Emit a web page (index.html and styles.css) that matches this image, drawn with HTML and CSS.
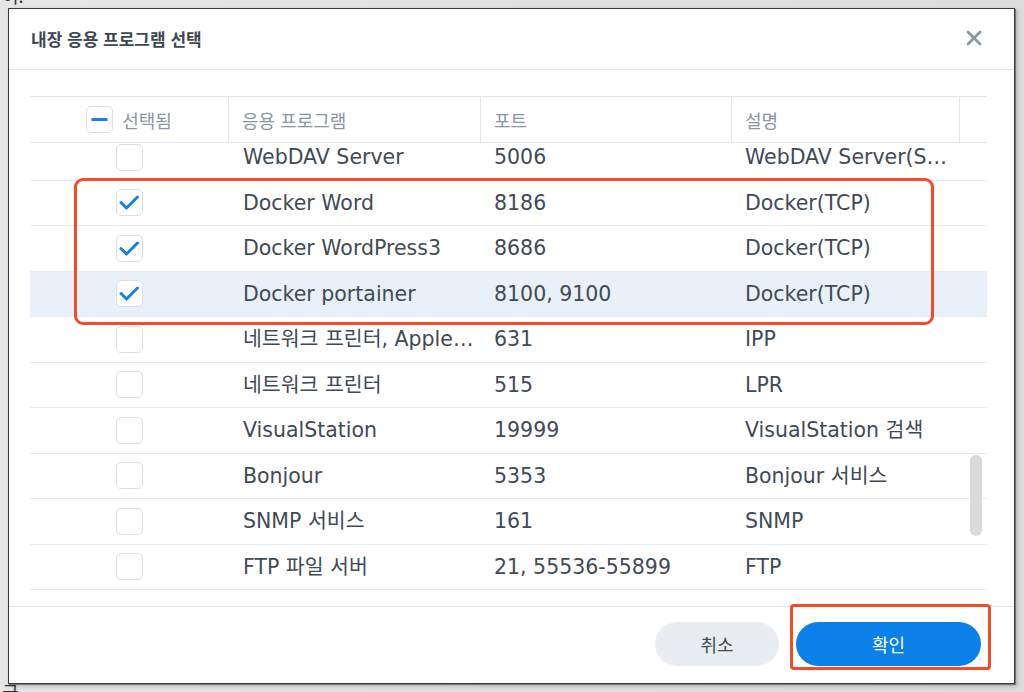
FILE: index.html
```html
<!DOCTYPE html>
<html lang="ko">
<head>
  <meta charset="UTF-8">
  <title>내장 응용 프로그램 선택</title>
  <link rel="stylesheet" href="styles.css">
</head>
<body>

<div class="page">
  <!-- 뒤쪽 창에 남은 글자 -->
  <div class="back-text back-top">이.</div>
  <div class="back-text back-bottom">글</div>

  <div class="dialog">
    <div class="dlg-head">
      <span class="dlg-title">내장 응용 프로그램 선택</span>
      <a class="dlg-close" href="javascript:;">
        <svg width="16" height="16" viewBox="0 0 16 16"><path d="M2 2L14 14M14 2L2 14" stroke="#8d97a1" stroke-width="2.8" stroke-linecap="round"/></svg>
      </a>
    </div>

    <div class="dlg-body">
      <div class="grid-head">
        <div class="hcell hcell-check">
          <span class="cbox">
            <svg width="27" height="27" viewBox="0 0 27 27"><path d="M5.5 13.5H21.5" stroke="#1a7fe6" stroke-width="3"/></svg>
          </span>
          <span>선택됨</span>
        </div>
        <div class="hcell">응용 프로그램</div>
        <div class="hcell">포트</div>
        <div class="hcell">설명</div>
        <div class="hcell hcell-last"></div>
      </div>

      <div class="grid-body">
        <div class="rows">
          <div class="row">
            <div class="cell cell-check"><span class="cbox"></span></div>
            <div class="cell cell-name">WebDAV Server</div>
            <div class="cell">5006</div>
            <div class="cell cell-desc">WebDAV Server(SSL)</div>
          </div>
          <div class="row">
            <div class="cell cell-check"><span class="cbox"><svg width="27" height="27" viewBox="0 0 27 27"><path d="M5 13.5L10.5 19L21.5 8" fill="none" stroke="#1a7fe6" stroke-width="3" stroke-linecap="round" stroke-linejoin="round"/></svg></span></div>
            <div class="cell cell-name">Docker Word</div>
            <div class="cell">8186</div>
            <div class="cell cell-desc">Docker(TCP)</div>
          </div>
          <div class="row">
            <div class="cell cell-check"><span class="cbox"><svg width="27" height="27" viewBox="0 0 27 27"><path d="M5 13.5L10.5 19L21.5 8" fill="none" stroke="#1a7fe6" stroke-width="3" stroke-linecap="round" stroke-linejoin="round"/></svg></span></div>
            <div class="cell cell-name">Docker WordPress3</div>
            <div class="cell">8686</div>
            <div class="cell cell-desc">Docker(TCP)</div>
          </div>
          <div class="row row-on">
            <div class="cell cell-check"><span class="cbox"><svg width="27" height="27" viewBox="0 0 27 27"><path d="M5 13.5L10.5 19L21.5 8" fill="none" stroke="#1a7fe6" stroke-width="3" stroke-linecap="round" stroke-linejoin="round"/></svg></span></div>
            <div class="cell cell-name">Docker portainer</div>
            <div class="cell">8100, 9100</div>
            <div class="cell cell-desc">Docker(TCP)</div>
          </div>
          <div class="row">
            <div class="cell cell-check"><span class="cbox"></span></div>
            <div class="cell cell-name">네트워크 프린터, AppleTalk</div>
            <div class="cell">631</div>
            <div class="cell cell-desc">IPP</div>
          </div>
          <div class="row">
            <div class="cell cell-check"><span class="cbox"></span></div>
            <div class="cell cell-name">네트워크 프린터</div>
            <div class="cell">515</div>
            <div class="cell cell-desc">LPR</div>
          </div>
          <div class="row">
            <div class="cell cell-check"><span class="cbox"></span></div>
            <div class="cell cell-name">VisualStation</div>
            <div class="cell">19999</div>
            <div class="cell cell-desc">VisualStation 검색</div>
          </div>
          <div class="row">
            <div class="cell cell-check"><span class="cbox"></span></div>
            <div class="cell cell-name">Bonjour</div>
            <div class="cell">5353</div>
            <div class="cell cell-desc">Bonjour 서비스</div>
          </div>
          <div class="row">
            <div class="cell cell-check"><span class="cbox"></span></div>
            <div class="cell cell-name">SNMP 서비스</div>
            <div class="cell">161</div>
            <div class="cell cell-desc">SNMP</div>
          </div>
          <div class="row">
            <div class="cell cell-check"><span class="cbox"></span></div>
            <div class="cell cell-name">FTP 파일 서버</div>
            <div class="cell">21, 55536-55899</div>
            <div class="cell cell-desc">FTP</div>
          </div>
        </div>
        <!-- 스크롤바 -->
        <div class="scroll-thumb"></div>
      </div>
    </div>

    <div class="dlg-foot">
      <a class="btn btn-cancel" href="javascript:;">취소</a>
      <a class="btn btn-ok" href="javascript:;">확인</a>
    </div>
  </div>

  <!-- 빨간 표시 -->
  <div class="mark mark-rows"></div>
  <div class="mark mark-ok"></div>
</div>

</body>
</html>
```

FILE: styles.css
```css
* {
  margin: 0;
  padding: 0;
  box-sizing: border-box;
}

body {
  width: 1024px;
  height: 692px;
  overflow: hidden;
  background: #e3e3e3;
  font-family: "DejaVu Sans", "Noto Sans CJK KR", sans-serif;
  color: #414b55;
}

a {
  text-decoration: none;
  color: inherit;
}

.page {
  position: relative;
  height: 692px;
  padding: 8px 9px 8px 8px;
  background: linear-gradient(to right, #e6e6e6, #dcdcdc);
}

.back-text {
  position: absolute;
  left: 2px;
  font-size: 18px;
  color: #333;
  font-family: "Noto Sans CJK KR", sans-serif;
}

.back-top {
  top: -18px;
}

.back-bottom {
  top: 679px;
}

.dialog {
  position: relative;
  width: 1007px;
  height: 676px;
  display: flex;
  flex-direction: column;
  background: #ffffff;
  border: 1px solid #3a3a3a;
  box-shadow: 1px 1px 0 #777, 2px 2px 4px rgba(0, 0, 0, 0.25);
}

.dlg-head {
  height: 61px;
  flex: none;
  display: flex;
  align-items: center;
  justify-content: space-between;
  padding: 0 32px 0 22px;
  border-bottom: 1px solid #e3e8ee;
}

.dlg-title {
  font-family: "Noto Sans CJK KR", sans-serif;
  font-weight: 700;
  font-size: 17px;
  color: #3e4852;
  margin-top: -2px;
}

.dlg-close {
  display: flex;
  margin-top: -2px;
}

.dlg-body {
  flex: 1;
  padding: 26px 0 0 21px;
}

.grid-head,
.row {
  display: grid;
  grid-template-columns: 199px 252px 251px 228px 27px;
  width: 957px;
}

.grid-head {
  height: 47px;
  border-top: 1px solid #dfe6ee;
  border-bottom: 1px solid #dfe6ee;
}

.hcell {
  display: flex;
  align-items: center;
  padding-left: 13px;
  border-right: 1px solid #dfe6ee;
  font-family: "Noto Sans CJK KR", sans-serif;
  font-size: 18px;
  color: #8c96a0;
}

.hcell-check {
  justify-content: center;
  padding-left: 0;
  gap: 9px;
}

.hcell-last {
  border-right: none;
}

.cbox {
  display: block;
  width: 27px;
  height: 27px;
  border: 1px solid #d8e0e9;
  border-radius: 5px;
  background: #fff;
  position: relative;
}

.cbox svg {
  position: absolute;
  left: -1px;
  top: -1px;
}

.grid-body {
  position: relative;
  height: 447px;
  overflow: hidden;
}

.rows {
  margin-top: -8px;
}

.row {
  height: 45.5px;
  border-bottom: 1px solid #e6ebf0;
}

.row-on {
  background: #e8f0fa;
}

.cell {
  padding: 0 16px 0 13px;
  font-size: 20.5px;
  line-height: 44px;
  white-space: nowrap;
  overflow: hidden;
  text-overflow: ellipsis;
}

.cell-name {
  padding: 0 4px 0 14px;
}

.cell-desc {
  padding-right: 5px;
}

.cell-check {
  display: flex;
  align-items: center;
  justify-content: center;
  padding: 0;
}

.scroll-thumb {
  position: absolute;
  left: 940px;
  top: 312px;
  width: 12px;
  height: 81px;
  border-radius: 6px;
  background: #dadada;
}

.dlg-foot {
  height: 77px;
  flex: none;
  display: flex;
  justify-content: flex-end;
  gap: 17px;
  padding: 15px 33px 0 0;
  border-top: 1px solid #e3e8ee;
}

.btn {
  display: flex;
  align-items: center;
  justify-content: center;
  height: 44px;
  border-radius: 22px;
  font-family: "Noto Sans CJK KR", sans-serif;
  font-size: 18px;
}

.btn-cancel {
  width: 124px;
  background: #e9edf1;
  color: #414b55;
}

.btn-ok {
  width: 185px;
  background: #0b80e8;
  color: #ffffff;
}

.mark {
  position: absolute;
  border: 3px solid #f24c27;
}

.mark-rows {
  left: 74px;
  top: 178px;
  width: 860px;
  height: 147px;
  border-radius: 9px;
}

.mark-ok {
  left: 790px;
  top: 604px;
  width: 201px;
  height: 66px;
  border-radius: 4px;
}
```
